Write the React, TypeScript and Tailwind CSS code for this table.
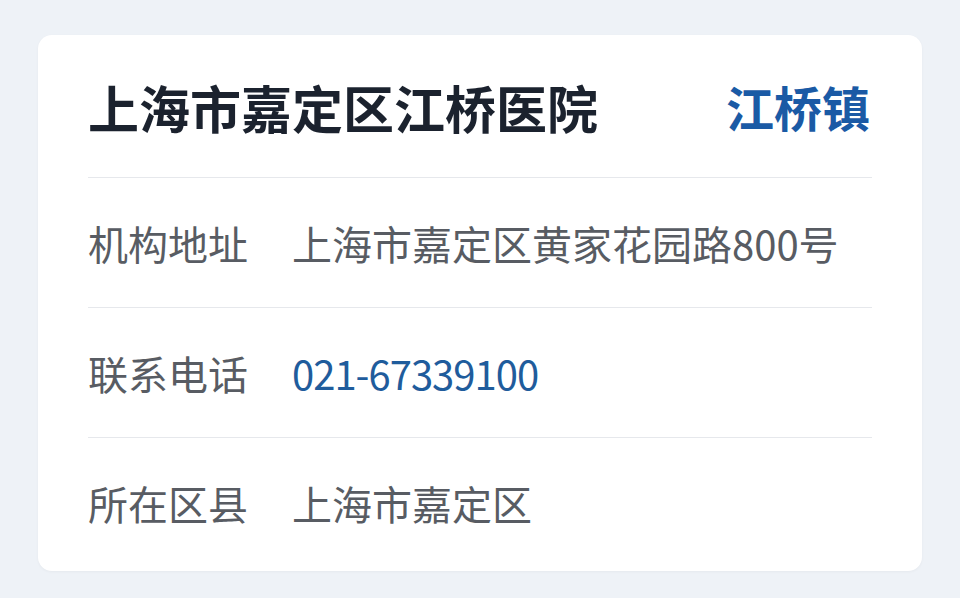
const rows = [
    { label: "机构地址", value: "上海市嘉定区黄家花园路800号", link: false },
    { label: "联系电话", value: "021-67339100", link: true },
    { label: "所在区县", value: "上海市嘉定区", link: false },
];

export default function App() {
    return (
        <div
            className="min-h-screen bg-[#eef2f7] px-[38px] pt-[35px]"
            style={{ fontFamily: '"Noto Sans CJK SC", "Noto Sans", sans-serif' }}
        >
            <div className="bg-white rounded-[14px] shadow-[0_1px_3px_rgba(0,0,0,0.04)] px-[50px] pb-[3px]">
                <div className="flex items-center justify-between h-[143px] border-b border-[#e6e8ec]">
                    <h1 className="text-[51px] leading-none font-bold text-[#1b222e] pt-[2px]">
                        上海市嘉定区江桥医院
                    </h1>
                    <span className="text-[48px] leading-none font-bold text-[#1a5aa5] pr-[2px]">江桥镇</span>
                </div>
                {rows.map((row, i) => (
                    <div
                        key={row.label}
                        className={`flex items-center h-[130px] ${i < rows.length - 1 ? "border-b border-[#e6e8ec]" : ""}`}
                    >
                        <span className="w-[204px] shrink-0 text-[40px] leading-none text-[#585c63]">{row.label}</span>
                        <span
                            className={`text-[40px] leading-none ${row.link ? "text-[#1f5c9c] tracking-[-1px]" : "text-[#585c63]"}`}
                        >
                            {row.value}
                        </span>
                    </div>
                ))}
            </div>
        </div>
    );
}
